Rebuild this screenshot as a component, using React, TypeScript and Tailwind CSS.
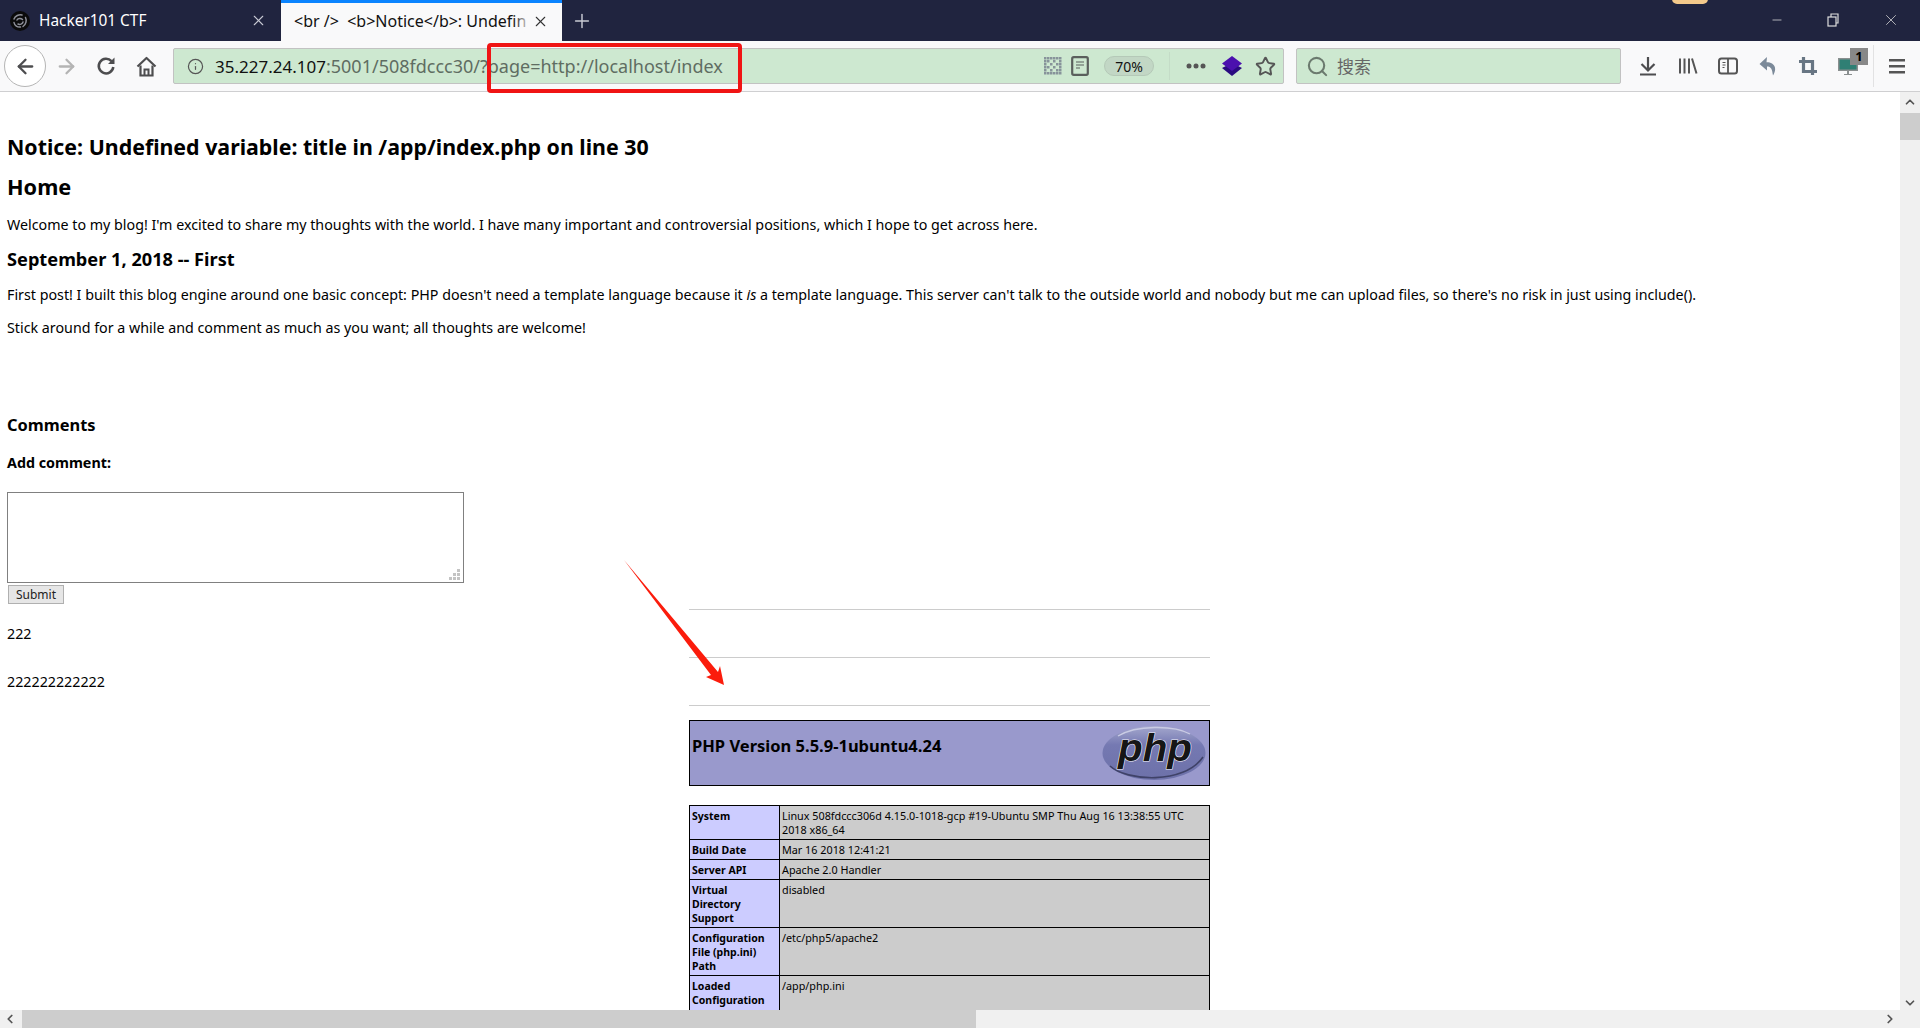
import React from "react";
import { X, Plus, ArrowLeft, ArrowRight, Info, Star, Search, Minus, ChevronUp, ChevronDown, ChevronLeft, ChevronRight } from "lucide-react";

const F = "font-['Noto_Sans',sans-serif]";

function PhpLogo() {
  return (
    <svg width="104" height="56" viewBox="0 0 104 56" className="mr-[1px] mt-[2px]">
      <defs>
        <linearGradient id="g" x1="0" y1="0" x2="0" y2="1">
          <stop offset="0" stopColor="#a4a7cd" />
          <stop offset="0.35" stopColor="#7579b2" />
          <stop offset="1" stopColor="#6d71a9" />
        </linearGradient>
      </defs>
      <ellipse cx="52" cy="28" rx="51.5" ry="27" fill="url(#g)" />
      <path d="M8 41C24 56 82 60 101 32" fill="none" stroke="#3f4268" strokeWidth="1.6" />
      <path d="M16 11C34 0 72 0 88 9" fill="none" stroke="#c9cbe4" strokeWidth="1.4" />
      <text x="16" y="36" textLength="74" lengthAdjust="spacingAndGlyphs" fontFamily="'Liberation Sans',sans-serif" fontStyle="italic" fontWeight="700" fontSize="38" fill="#161616" stroke="#f4f4fa" strokeWidth="1.1" paintOrder="stroke">php</text>
    </svg>
  );
}

function TabLogo() {
  return (
    <svg width="20" height="20" viewBox="0 0 20 20" fill="none">
      <circle cx="10" cy="10" r="10" fill="#0b0b0b" />
      <g stroke="#8d8f98" strokeWidth="1.5" strokeLinecap="round">
        <path d="M4 8c1-3 5-5 8-4" />
        <path d="M15.5 6.5c1.5 3 .5 7-2.5 9" />
        <path d="M10.5 16c-3 .5-6-1.5-6.5-4.5" />
        <path d="M7 9c1-2 4-2 5.500-.5" />
        <path d="M13 11c-.5 2-3 3-5 2" />
      </g>
    </svg>
  );
}

function ReloadIcon() {
  return (
    <svg width="20" height="20" viewBox="0 0 20 20" fill="none" className="ml-[18px]">
      <path d="M15.500 5.200A7.300 7.300 0 1 0 17.300 11" stroke="#4d4d4f" strokeWidth="2.500" />
      <path d="M18.500 1.500V8h-6.500z" fill="#4d4d4f" />
    </svg>
  );
}

function HomeIcon() {
  return (
    <svg width="21" height="21" viewBox="0 0 21 21" fill="none" className="ml-[20px]">
      <path d="M1.500 10.500L10.500 2l9 8.500" stroke="#4d4d4f" strokeWidth="2.200" strokeLinejoin="round" />
      <path d="M4.500 9.500V19.500H16.500V9.500" stroke="#4d4d4f" strokeWidth="2.200" />
      <path d="M8.500 19V13.500H12.500V19" stroke="#4d4d4f" strokeWidth="2" />
    </svg>
  );
}

function QrIcon() {
  const cells: [number, number][] = [];
  for (let y = 0; y < 6; y++) for (let x = 0; x < 6; x++) if ((x + y) % 2 === 0 || x % 5 === 0 || y % 5 === 0) cells.push([x, y]);
  return (
    <svg width="18" height="18" viewBox="0 0 18 18" fill="#87939a">
      {cells.map(([x, y]) => <rect key={`${x}-${y}`} x={x * 3} y={y * 3} width="2.500" height="2.500" />)}
    </svg>
  );
}

function DocIcon() {
  return (
    <svg width="18" height="20" viewBox="0 0 18 20" fill="none" className="ml-[9px]">
      <rect x="1.200" y="1.200" width="15.600" height="17.600" rx="1.500" stroke="#5a5f5c" strokeWidth="2.200" />
      <path d="M5 6h8M5 9h8M5 12h4" stroke="#5a5f5c" strokeWidth="1.200" />
    </svg>
  );
}

function DiamondIcon() {
  return (
    <svg width="20" height="20" viewBox="0 0 20 20" className="ml-[16px]">
      <path d="M0 12l10-5 10 5-10 8z" fill="#2a0a80" />
      <path d="M10 0l10 7.500L10 15 0 7.500z" fill="#4b10ae" />
    </svg>
  );
}

function LibraryIcon() {
  return (
    <svg width="20" height="20" viewBox="0 0 20 20" className="ml-[20px]" fill="none" stroke="#555" strokeWidth="2">
      <path d="M2 2.500v15M6.500 2.500v15M11 2.500v15M14 2.500l4.500 15" />
    </svg>
  );
}

function SidebarIcon() {
  return (
    <svg width="20" height="20" viewBox="0 0 20 20" className="ml-[20px]" fill="none" stroke="#555">
      <rect x="1" y="2.500" width="18" height="15" rx="2.500" strokeWidth="2" />
      <path d="M10 3v14" strokeWidth="1.800" />
      <path d="M4.500 6.500h3M4.500 9h3M4.500 11.500h2" strokeWidth="1" />
    </svg>
  );
}

function UndoIcon() {
  return (
    <svg width="20" height="20" viewBox="0 0 20 20" className="ml-[20px]">
      <path d="M9 1L1.500 8 9 14.500V10.500c3 0 5 1.500 5.500 6.500l.5 2.500c2.500-4 3.500-9-1-12-1.500-1-3-1.300-5.500-1.300z" fill="#7c8a99" />
    </svg>
  );
}

function CropIcon() {
  return (
    <svg width="20" height="20" viewBox="0 0 20 20" className="ml-[20px]" fill="none" stroke="#687683" strokeWidth="3.200">
      <path d="M5.500 1v14.500H19" />
      <path d="M1 5.500h13.500V19" />
    </svg>
  );
}

export default function App() {
  return (
    <div className={`relative h-[1028px] w-[1920px] overflow-hidden bg-white flex flex-col text-black ${F}`}>
      {/* tab bar */}
      <div className="relative flex h-[41px] shrink-0 bg-[#20243f] text-white">
        <div className="flex w-[281px] items-center pl-[10px] pr-[14px]">
          <TabLogo />
          <span className="ml-[9px] flex-1 text-[15.4px]">Hacker101 CTF</span>
          <X size={17} color="#c8cad4" strokeWidth={1.5} />
        </div>
        <div className="relative flex w-[281px] items-center border-t-[3px] border-[#0a84ff] bg-[#f9f9fa] pb-[2px] pl-[13px] pr-[13px] text-[#111]">
          <span className="flex-1 whitespace-pre text-[16px]">&lt;br /&gt;  &lt;b&gt;Notice&lt;/b&gt;: Undefin</span>
          <div className="absolute right-[31px] top-0 h-full w-[18px] bg-gradient-to-r from-[#f9f9fa00] to-[#f9f9fa]" />
          <X size={17} color="#333" strokeWidth={1.5} className="ml-[4px]" />
        </div>
        <div className="flex w-[40px] items-center justify-center"><Plus size={22} color="#c8cad4" strokeWidth={1.6} /></div>
        <div className="flex-1" />
        <div className="flex items-center gap-[42px] pb-[2px] pr-[20px]">
          <Minus size={14} color="#ddd" strokeWidth={1.3} />
          <svg width="14" height="14" viewBox="0 0 14 14" fill="none" stroke="#ddd" strokeWidth="1.2"><rect x="2" y="4" width="8" height="9" /><path d="M5 4V1h7v9h-2" /></svg>
          <X size={18} color="#ddd" strokeWidth={1} />
        </div>
        <div className="absolute left-[1672px] top-[-6px] h-[10px] w-[36px] rounded-full bg-[#f3c98b]" />
      </div>
      {/* toolbar */}
      <div className="flex h-[51px] shrink-0 items-center border-b border-[#cfcfd1] bg-[#f9f9fa] pl-[4px] text-[#444]">
        <div className="flex h-[42px] w-[42px] items-center justify-center rounded-full border border-[#b5b5b5] bg-white"><ArrowLeft size={23} strokeWidth={2.4} color="#4d4d4f" /></div>
        <ArrowRight size={23} strokeWidth={2.4} color="#b4b4b4" className="ml-[9px]" />
        <ReloadIcon />
        <HomeIcon />
        <div className="ml-[16px] flex h-[36px] w-[1111px] items-center rounded-[2px] border border-[#c2c2c2] bg-[#cde8d0] pl-[13px] pr-[7px] text-[17px]">
          <Info size={17} color="#555" strokeWidth={1.7} />
          <span className="ml-[11px] whitespace-nowrap"><span className="text-[#111]">35.227.24.107</span><span className="text-[18px] text-[#5f6d62]">:5001/508fdccc30/?page=http://localhost/index</span></span>
          <div className="flex-1" />
          <QrIcon />
          <DocIcon />
          <div className="ml-[15px] flex h-[20px] w-[50px] items-center justify-center rounded-full border border-[#b5c9b8] bg-[#c2d7c5] text-[14px] text-[#111]">70%</div>
          <div className="ml-[15px] h-[28px] w-px bg-[#c4dcc7]" />
          <svg width="20" height="6" viewBox="0 0 20 6" fill="#555" className="ml-[16px]"><circle cx="3" cy="3" r="2.500" /><circle cx="10" cy="3" r="2.500" /><circle cx="17" cy="3" r="2.500" /></svg>
          <DiamondIcon />
          <Star size={21} color="#555" strokeWidth={2.2} className="ml-[13px]" />
        </div>
        <div className="ml-[12px] flex h-[36px] w-[325px] items-center rounded-[2px] border border-[#c2c2c2] bg-[#cde8d0] pl-[9px] text-[17px] text-[#666]">
          <Search size={23} color="#6b7a6e" strokeWidth={2.2} />
          <span className="ml-[8px] font-['Noto_Sans_CJK_SC',sans-serif]">搜索</span>
        </div>
        <svg width="20" height="20" viewBox="0 0 20 20" fill="none" stroke="#4d4d4f" strokeWidth="2.200" className="ml-[17px]"><path d="M10 1v13M3.500 8l6.500 6.500L16.500 8M2 18.500h16" /></svg>
        <LibraryIcon />
        <SidebarIcon />
        <UndoIcon />
        <CropIcon />
        <div className="relative ml-[20px] h-[20px] w-[20px]">
          <svg width="20" height="20" viewBox="0 0 20 20"><rect x="0" y="2" width="20" height="13" fill="#8a8f8f" /><rect x="1.500" y="3.500" width="17" height="10" fill="#2f7f74" /><path d="M9 15h2v3h3v1H6v-1h3z" fill="#8a8f8f" /></svg>
          <div className="absolute left-[12px] top-[-8px] flex h-[17px] w-[18px] items-center justify-center bg-[#888] text-[13px] font-bold leading-none text-black">1</div>
        </div>
        <div className="ml-[15px] h-[42px] w-px bg-[#e2e2e3]" />
        <svg width="16" height="16" viewBox="0 0 16 16" fill="#555" className="ml-[15px]"><rect y="1" width="16" height="2.500" /><rect y="7" width="16" height="2.500" /><rect y="13" width="16" height="2.500" /></svg>
      </div>
      {/* page */}
      <div className="flex min-h-0 flex-1">
        <div className="flex min-w-0 flex-1 flex-col">
          <div className="min-h-0 flex-1 overflow-hidden pl-[7px]">
            <h1 className="mt-[39px] text-[21.35px] font-bold leading-[32px]">Notice: Undefined variable: title in /app/index.php on line 30</h1>
            <h2 className="mt-[8px] text-[21.7px] font-bold leading-[32px]">Home</h2>
            <p className="mt-[12px] text-[14.27px] leading-[20px]">Welcome to my blog! I'm excited to share my thoughts with the world. I have many important and controversial positions, which I hope to get across here.</p>
            <h3 className="mt-[12px] text-[18.2px] font-bold leading-[24px]">September 1, 2018 -- First</h3>
            <p className="mt-[14px] text-[14.28px] leading-[20px]">First post! I built this blog engine around one basic concept: PHP doesn't need a template language because it <i>is</i> a template language. This server can't talk to the outside world and nobody but me can upload files, so there's no risk in just using include().</p>
            <p className="mt-[13px] text-[14.27px] leading-[20px]">Stick around for a while and comment as much as you want; all thoughts are welcome!</p>
            <div className="flex">
              <div className="w-[682px] shrink-0">
                <h3 className="mt-[77px] text-[16.4px] font-bold leading-[20px]">Comments</h3>
                <p className="mt-[18px] text-[14.3px] font-bold leading-[20px]">Add comment:</p>
                <div className="relative mt-[19px] h-[91px] w-[457px]">
                  <textarea className="block h-full w-full resize-none border border-[#808080]" />
                  <svg width="12" height="12" viewBox="0 0 12 12" fill="#c4c4c4" className="absolute bottom-[2px] right-[3px]">
                    <rect x="8" y="0" width="3" height="3" /><rect x="4" y="4" width="3" height="3" /><rect x="8" y="4" width="3" height="3" /><rect x="0" y="8" width="3" height="3" /><rect x="4" y="8" width="3" height="3" /><rect x="8" y="8" width="3" height="3" />
                  </svg>
                </div>
                <button className="ml-px mt-[2px] block h-[19px] w-[56px] border border-[#b0b0b0] bg-[#e6e6e6] text-[12px] leading-none text-[#222]">Submit</button>
                <p className="mt-[20px] text-[14.27px] leading-[20px]">222</p>
                <p className="mt-[28px] text-[14.27px] leading-[20px]">222222222222</p>
              </div>
              <div className="w-[521px] shrink-0 pt-[271px]">
                <div className="h-px bg-[#ccc]" />
                <div className="mt-[47px] h-px bg-[#ccc]" />
                <div className="mt-[47px] h-px bg-[#ccc]" />
                <div className="mt-[14px] flex h-[66px] justify-between border border-black bg-[#9999cc] pl-[2px] pr-[2px] pt-[2px]">
                  <span className="mt-[13px] text-[16.5px] font-bold leading-[20px]">PHP Version 5.5.9-1ubuntu4.24</span>
                  <PhpLogo />
                </div>
                <table className="mt-[19px] w-full border-collapse leading-[14px]">
                  <tbody>
                    {[
                      [["System"], ["Linux 508fdccc306d 4.15.0-1018-gcp #19-Ubuntu SMP Thu Aug 16 13:38:55 UTC", "2018 x86_64"]],
                      [["Build Date"], ["Mar 16 2018 12:41:21"]],
                      [["Server API"], ["Apache 2.0 Handler"]],
                      [["Virtual", "Directory", "Support"], ["disabled"]],
                      [["Configuration", "File (php.ini)", "Path"], ["/etc/php5/apache2"]],
                      [["Loaded", "Configuration", "\u00a0"], ["/app/php.ini"]],
                    ].map(([k, v], i) => (
                      <tr key={i}>
                        <td className="w-[90px] border border-black bg-[#ccccff] px-[2px] pb-[2px] pt-[3px] align-top text-[10.5px] font-bold">{k.map((t) => <div key={t}>{t}</div>)}</td>
                        <td className="border border-black bg-[#cccccc] px-[2px] pb-[2px] pt-[3px] align-top text-[10.8px]">{v.map((t) => <div key={t}>{t}</div>)}</td>
                      </tr>
                    ))}
                  </tbody>
                </table>
              </div>
            </div>
          </div>
          <div className="flex h-[18px] shrink-0 items-center bg-[#f0f0f0] text-[#555]">
            <ChevronLeft size={14} strokeWidth={3} className="ml-[3px]" />
            <div className="ml-[5px] h-full w-[954px] bg-[#cdcdcd]" />
            <div className="flex-1" />
            <ChevronRight size={14} strokeWidth={3} className="mr-[3px]" />
          </div>
        </div>
        <div className="flex w-[20px] shrink-0 flex-col items-center bg-[#f0f0f0] text-[#555]">
          <ChevronUp size={14} strokeWidth={3} className="mt-[3px]" />
          <div className="mt-[4px] h-[27px] w-full bg-[#cdcdcd]" />
          <div className="flex-1" />
          <ChevronDown size={14} strokeWidth={3} className="mb-[18px]" />
        </div>
      </div>
      {/* annotations */}
      <div className="absolute left-[487px] top-[43px] h-[50px] w-[255px] rounded-[4px] border-[4px] border-[#f01414]" />
      <svg className="absolute left-[620px] top-[555px]" width="110" height="135" viewBox="0 0 110 135">
        <path d="M4 5L98 117L100 111L104 130L86 122L91 120Z" fill="#fb1c0c" />
      </svg>
    </div>
  );
}
